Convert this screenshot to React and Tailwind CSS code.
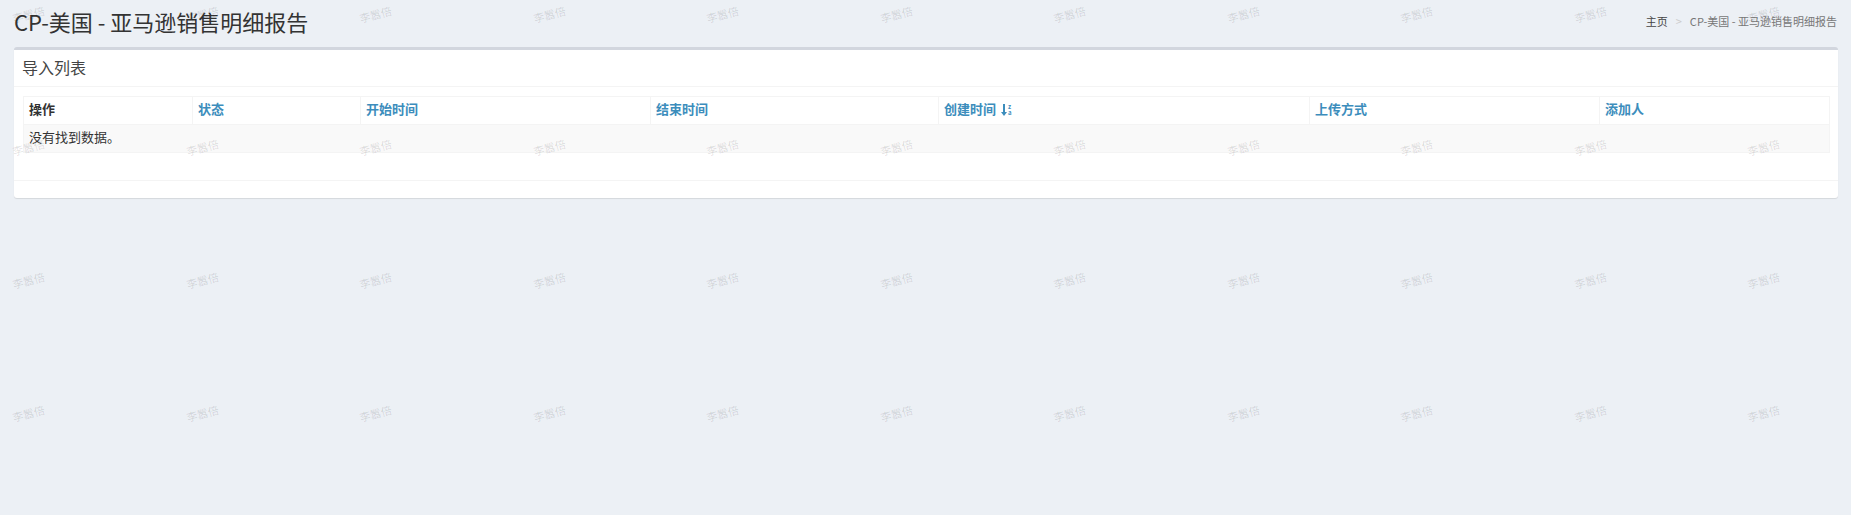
import React from 'react';

const columns = [
  { key: 'op', label: '操作', width: 'w-[169px]', link: false },
  { key: 'status', label: '状态', width: 'w-[168px]', link: true },
  { key: 'start', label: '开始时间', width: 'w-[290px]', link: true },
  { key: 'end', label: '结束时间', width: 'w-[288px]', link: true },
  { key: 'created', label: '创建时间', width: 'w-[371px]', link: true, sorted: true },
  { key: 'upload', label: '上传方式', width: 'w-[290px]', link: true },
  { key: 'user', label: '添加人', width: 'w-[230px]', link: true },
];

// z -> a sort indicator next to the active column
function SortDesc() {
  return (
    <span className="inline-flex items-center ml-[5px] align-middle">
      <svg width="6" height="12" viewBox="0 0 6 12" fill="currentColor">
        <rect x="2" y="0" width="2" height="9" />
        <path d="M0 8h6l-3 4z" />
      </svg>
      <span className="flex flex-col ml-[1px] text-[6px] leading-[6px] font-bold">
        <span>z</span>
        <span>a</span>
      </span>
    </span>
  );
}

function Watermarks() {
  const cells = Array.from({ length: 60 });
  return (
    <div className="absolute inset-0 pointer-events-none overflow-hidden">
      <div className="absolute left-[-58px] top-[-52px] grid grid-cols-[repeat(12,173.5px)] auto-rows-[133px]">
        {cells.map((_, i) => (
          <div key={i} className="flex items-center justify-center">
            <span className="-rotate-[15deg] text-[11px] leading-none text-black/[0.13] whitespace-nowrap">李嚣倍</span>
          </div>
        ))}
      </div>
    </div>
  );
}

export default function App() {
  return (
    <div className="relative min-h-screen bg-[#ecf0f5] font-['Noto_Sans_CJK_SC',sans-serif] text-[#333]">
      {/* Page header */}
      <div className="flex items-center justify-between h-[47px] pb-[5px] pl-[14px] pr-[14px]">
        <h1 className="text-[22px] leading-[30px] text-[#333]">CP-美国 - 亚马逊销售明细报告</h1>
        <div className="flex items-center text-[11px] leading-[14px]">
          <span className="text-[#444]">主页</span>
          <span className="text-[#ccc] mx-[8px]">&gt;</span>
          <span className="text-[#777]">CP-美国 - 亚马逊销售明细报告</span>
        </div>
      </div>

      {/* Box */}
      <div className="ml-[14px] mr-[13px] bg-white border-t-[3px] border-[#d2d6de] rounded-[3px] shadow-[0_1px_1px_rgba(0,0,0,0.1)]">
        <div className="flex items-center h-[37px] pl-[8px] pb-[3px] border-b border-[#f4f4f4]">
          <span className="text-[16px] leading-none text-[#444]">导入列表</span>
        </div>

        <div className="px-[9px] pt-[9px] pb-[10px]">
          <table className="w-full table-fixed border-collapse mb-[17px] text-[13px]">
            <colgroup>
              {columns.map((c) => (
                <col key={c.key} className={c.width} />
              ))}
            </colgroup>
            <thead>
              <tr>
                {columns.map((c) => (
                  <th
                    key={c.key}
                    className={`border border-[#f4f4f4] px-[5px] pt-[3px] pb-[7px] leading-[17px] text-left font-bold ${c.link ? 'text-[#3c8dbc]' : 'text-[#333]'}`}
                  >
                    {c.label}
                    {c.sorted && <SortDesc />}
                  </th>
                ))}
              </tr>
            </thead>
            <tbody>
              <tr className="bg-[#f9f9f9]">
                <td colSpan={7} className="border border-[#f4f4f4] px-[5px] pt-[3px] pb-[7px] leading-[17px]">
                  没有找到数据。
                </td>
              </tr>
            </tbody>
          </table>
        </div>

        <div className="h-[18px] border-t border-[#f4f4f4]" />
      </div>

      <Watermarks />
    </div>
  );
}
